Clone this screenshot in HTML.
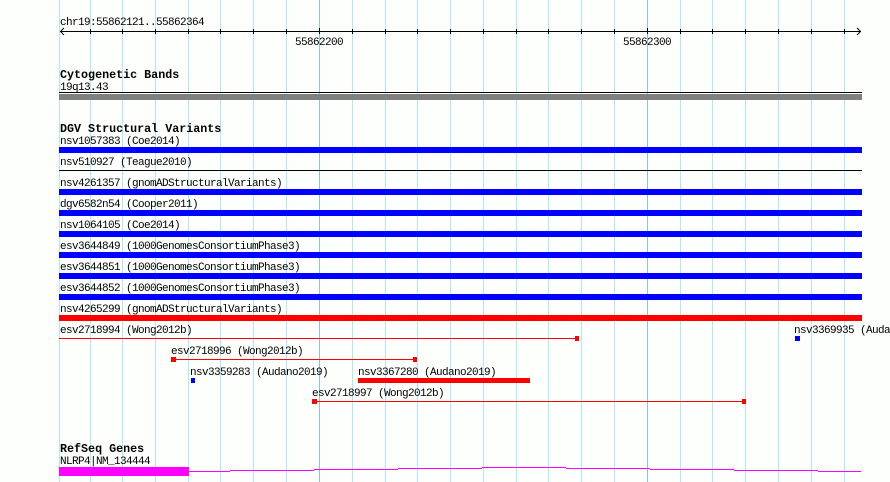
<!DOCTYPE html>
<html><head><style>
html,body{margin:0;padding:0;background:#fff;}
svg{display:block;}
text{font-family:"Liberation Mono","DejaVu Sans Mono",monospace;font-size:11px;letter-spacing:-0.6px;fill:#000;}
.t{font-weight:bold;font-size:11.7px;letter-spacing:0;}
</style></head><body>
<svg width="890" height="482" xmlns="http://www.w3.org/2000/svg">
<rect width="890" height="482" fill="#fdfffd"/>
<g stroke="#aeeaee" stroke-width="1">
<line x1="59.5" y1="0" x2="59.5" y2="482"/>
<line x1="90.5" y1="0" x2="90.5" y2="482"/>
<line x1="122.5" y1="0" x2="122.5" y2="482"/>
<line x1="155.5" y1="0" x2="155.5" y2="482"/>
<line x1="188.5" y1="0" x2="188.5" y2="482"/>
<line x1="220.5" y1="0" x2="220.5" y2="482"/>
<line x1="253.5" y1="0" x2="253.5" y2="482"/>
<line x1="286.5" y1="0" x2="286.5" y2="482"/>
<line x1="352.5" y1="0" x2="352.5" y2="482"/>
<line x1="385.5" y1="0" x2="385.5" y2="482"/>
<line x1="417.5" y1="0" x2="417.5" y2="482"/>
<line x1="450.5" y1="0" x2="450.5" y2="482"/>
<line x1="483.5" y1="0" x2="483.5" y2="482"/>
<line x1="516.5" y1="0" x2="516.5" y2="482"/>
<line x1="548.5" y1="0" x2="548.5" y2="482"/>
<line x1="581.5" y1="0" x2="581.5" y2="482"/>
<line x1="614.5" y1="0" x2="614.5" y2="482"/>
<line x1="680.5" y1="0" x2="680.5" y2="482"/>
<line x1="712.5" y1="0" x2="712.5" y2="482"/>
<line x1="745.5" y1="0" x2="745.5" y2="482"/>
<line x1="778.5" y1="0" x2="778.5" y2="482"/>
<line x1="811.5" y1="0" x2="811.5" y2="482"/>
<line x1="844.5" y1="0" x2="844.5" y2="482"/>
</g>
<g stroke="#8cc4e4"><line x1="319.5" y1="0" x2="319.5" y2="482"/><line x1="647.5" y1="0" x2="647.5" y2="482"/></g>
<text x="60" y="25">chr19:55862121..55862364</text>
<g stroke="#000" fill="none">
<line x1="60" y1="31.5" x2="861" y2="31.5"/>
<polyline points="64,28 60.5,31.5 64,35"/>
<polyline points="857,28 860.5,31.5 857,35"/>
<path d="M90.5 29v5M122.5 29v5M155.5 29v5M188.5 29v5M220.5 29v5M253.5 29v5M286.5 29v5M319.5 28v6M352.5 29v5M385.5 29v5M417.5 29v5M450.5 29v5M483.5 29v5M516.5 29v5M548.5 29v5M581.5 29v5M614.5 29v5M647.5 28v6M680.5 29v5M712.5 29v5M745.5 29v5M778.5 29v5M811.5 29v5M844.5 29v5"/>
</g>
<text x="295" y="45">55862200</text>
<text x="623" y="45">55862300</text>
<text class="t" x="60" y="78">Cytogenetic Bands</text>
<text x="60" y="90">19q13.43</text>
<rect x="59" y="92" width="803" height="1" fill="#000"/>
<rect x="59" y="94" width="803" height="6" fill="#808080"/>
<text class="t" x="60" y="132">DGV Structural Variants</text>
<text x="60" y="144">nsv1057383 (Coe2014)</text>
<rect x="59" y="147" width="803" height="6" fill="#0000ff"/>
<text x="60" y="165">nsv510927 (Teague2010)</text>
<rect x="59" y="170" width="803" height="1" fill="#000"/>
<text x="60" y="186">nsv4261357 (gnomADStructuralVariants)</text>
<rect x="59" y="189" width="803" height="6" fill="#0000ff"/>
<text x="60" y="207">dgv6582n54 (Cooper2011)</text>
<rect x="59" y="210" width="803" height="6" fill="#0000ff"/>
<text x="60" y="228">nsv1064105 (Coe2014)</text>
<rect x="59" y="231" width="803" height="6" fill="#0000ff"/>
<text x="60" y="249">esv3644849 (1000GenomesConsortiumPhase3)</text>
<rect x="59" y="252" width="803" height="6" fill="#0000ff"/>
<text x="60" y="270">esv3644851 (1000GenomesConsortiumPhase3)</text>
<rect x="59" y="273" width="803" height="6" fill="#0000ff"/>
<text x="60" y="291">esv3644852 (1000GenomesConsortiumPhase3)</text>
<rect x="59" y="294" width="803" height="6" fill="#0000ff"/>
<text x="60" y="312">nsv4265299 (gnomADStructuralVariants)</text>
<rect x="59" y="315" width="803" height="6" fill="#ff0000"/>
<text x="60" y="333">esv2718994 (Wong2012b)</text>
<rect x="59" y="338" width="518" height="1" fill="#ff0000"/>
<rect x="575" y="336" width="4" height="5" fill="#ff0000"/>
<text x="794" y="333">nsv3369935 (Auda</text>
<rect x="795" y="336" width="5" height="5" fill="#0000ff"/>
<text x="171" y="354">esv2718996 (Wong2012b)</text>
<rect x="171" y="359" width="245" height="1" fill="#ff0000"/>
<rect x="171" y="357" width="5" height="5" fill="#ff0000"/>
<rect x="413" y="357" width="4" height="5" fill="#ff0000"/>
<text x="190" y="375">nsv3359283 (Audano2019)</text>
<rect x="191" y="378" width="4" height="5" fill="#0000ff"/>
<text x="358" y="375">nsv3367280 (Audano2019)</text>
<rect x="358" y="378" width="172" height="5" fill="#ff0000"/>
<text x="312" y="396">esv2718997 (Wong2012b)</text>
<rect x="312" y="401" width="433" height="1" fill="#ff0000"/>
<rect x="312" y="399" width="5" height="5" fill="#ff0000"/>
<rect x="742" y="399" width="4" height="5" fill="#ff0000"/>
<text class="t" x="60" y="452">RefSeq Genes</text>
<text x="60" y="464">NLRP4|NM_134444</text>
<rect x="59" y="467" width="130" height="9" fill="#ff00ff"/>
<path d="M188 471.5H230M230 470.5H314M314 469.5H398M398 468.5H482M482 467.5H566M566 468.5H650M650 469.5H734M734 470.5H818M818 471.5H861" stroke="#ff00ff" stroke-width="1" fill="none"/>
</svg>
</body></html>
